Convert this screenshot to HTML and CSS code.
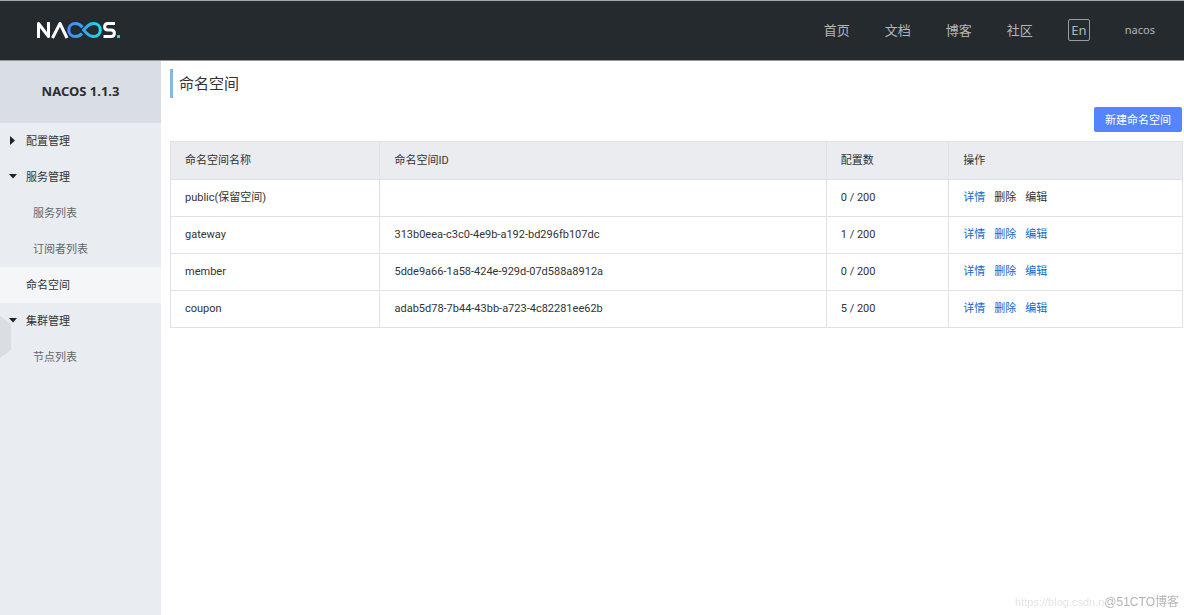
FILE: index.html
```html
<!DOCTYPE html>
<html lang="zh-CN">
<head>
<meta charset="utf-8">
<title>Nacos</title>
<link rel="stylesheet" href="styles.css">
</head>
<body>
<header class="topbar">
  <a class="logo" href="#" aria-label="Nacos">
    <svg width="84" height="18" viewBox="0 0 84 18" fill="none" stroke-width="3" stroke-linejoin="round">
      <defs><linearGradient id="loop" gradientUnits="userSpaceOnUse" x1="31" y1="0" x2="66" y2="0"><stop offset="0" stop-color="#4a88ff"/><stop offset=".5" stop-color="#2fa8f5"/><stop offset="1" stop-color="#16e4f5"/></linearGradient></defs>
      <path d="M2.500 17V2.500L12.500 15.500V1M16.500 17L24 2.500L31 17" stroke="#fff"/>
      <path d="M46 12.500C44 15 42 15.500 39.500 15.500C35.500 15.500 32.800 12.700 32.800 9S35.500 2.500 39.500 2.500C42.500 2.500 44.500 4 46.500 6.200" stroke="url(#loop)"/>
      <path d="M57.500 15.500C61.500 15.500 64.300 12.700 64.300 9S61.500 2.500 57.500 2.500C55 2.500 53 3.500 51 5.500L47.500 9L51 12.500C53 14.500 55 15.500 57.500 15.500Z" stroke="url(#loop)"/>
      <path d="M79 2.500H72C67.500 2.500 67.500 9 72 9H75C79.500 9 79.500 15.500 75 15.500H67.500" stroke="#fff"/>
      <path d="M81 14h3v3h-3z" fill="#16dff0"/>
    </svg>
  </a>
  <nav class="nav">
    <a href="#">首页</a>
    <a href="#">文档</a>
    <a href="#">博客</a>
    <a href="#">社区</a>
    <button class="lang" type="button">En</button>
    <a class="user" href="#">nacos</a>
  </nav>
</header>
<div class="body">
  <aside class="sidebar">
    <h1 class="version">NACOS 1.1.3</h1>
    <button class="collapse" type="button" aria-label="收起菜单"><svg width="11" height="42" viewBox="0 0 11 42"><path d="M0 0L11 8V34L0 42Z" fill="#d9dde4"/></svg></button>
    <nav class="menu">
      <a class="item" href="#"><svg class="caret" width="10" height="10" viewBox="0 0 10 10"><path d="M2 0L7 4.500L2 9Z"/></svg>配置管理</a>
      <a class="item" href="#"><svg class="caret" width="10" height="10" viewBox="0 0 10 10"><path d="M1 2H9L5 6.500Z"/></svg>服务管理</a>
      <a class="item sub" href="#">服务列表</a>
      <a class="item sub" href="#">订阅者列表</a>
      <a class="item active" href="#">命名空间</a>
      <a class="item" href="#"><svg class="caret" width="10" height="10" viewBox="0 0 10 10"><path d="M1 2H9L5 6.500Z"/></svg>集群管理</a>
      <a class="item sub" href="#">节点列表</a>
    </nav>
  </aside>
  <main class="main">
    <h2 class="title">命名空间</h2>
    <div class="actions"><button class="create" type="button">新建命名空间</button></div>
    <table class="table">
      <colgroup><col class="col-name"><col class="col-id"><col class="col-count"><col class="col-ops"></colgroup>
      <thead><tr><th>命名空间名称</th><th>命名空间ID</th><th>配置数</th><th>操作</th></tr></thead>
      <tbody>
        <tr><td>public(保留空间)</td><td></td><td>0 / 200</td><td><div class="ops"><a href="#">详情</a><span>删除</span><span>编辑</span></div></td></tr>
        <tr><td>gateway</td><td>313b0eea-c3c0-4e9b-a192-bd296fb107dc</td><td>1 / 200</td><td><div class="ops"><a href="#">详情</a><a href="#">删除</a><a href="#">编辑</a></div></td></tr>
        <tr><td>member</td><td>5dde9a66-1a58-424e-929d-07d588a8912a</td><td>0 / 200</td><td><div class="ops"><a href="#">详情</a><a href="#">删除</a><a href="#">编辑</a></div></td></tr>
        <tr><td>coupon</td><td>adab5d78-7b44-43bb-a723-4c82281ee62b</td><td>5 / 200</td><td><div class="ops"><a href="#">详情</a><a href="#">删除</a><a href="#">编辑</a></div></td></tr>
      </tbody>
    </table>
  </main>
</div>
<div class="watermark"><span class="mark-url">https://blog.csdn.n</span><span class="mark-site">@51CTO博客</span></div>
</body>
</html>
```
FILE: styles.css
```css
* { box-sizing: border-box; }
body {
  margin: 0;
  min-height: 100vh;
  display: flex;
  flex-direction: column;
  background: #fff;
  color: #333;
  font: 11px/16px "Noto Sans", "Noto Sans CJK SC", sans-serif;
}
a { color: inherit; text-decoration: none; }
button { font: inherit; padding: 0; border: 0; cursor: pointer; }

.topbar {
  display: flex;
  align-items: center;
  justify-content: space-between;
  height: 61px;
  padding: 0 29px 2px 36px;
  background: #252a2f;
  border-top: 1px solid #a3a7aa;
  border-bottom: 1px solid #92979b;
}
.logo svg { display: block; }
.nav { display: flex; align-items: center; gap: 35px; font-size: 13px; line-height: 20px; color: #b5b7b9; }
.lang { width: 22px; height: 22px; border: 1px solid #9b9ea0; border-radius: 2px; background: none; color: #b5b7b9; line-height: 20px; }
.user { font-size: 11px; }

.body { display: flex; flex: 1; }
.sidebar { position: relative; flex: none; width: 161px; background: #e9ecf1; }
.version { margin: 0; padding: 19px 0 21px; background: #d9dde4; font-size: 13px; line-height: 22px; text-align: center; color: #2b2d30; }
.collapse { position: absolute; left: 0; top: 255px; background: none; }
.collapse svg { display: block; }
.menu { position: relative; display: flex; flex-direction: column; }
.item { display: flex; align-items: center; height: 36px; padding-left: 26px; }
.sub { padding-left: 33px; color: #666; }
.active { background: #f4f6f8; }
.caret { margin: 0 8px 0 -18px; fill: #222; }

.main { flex: 1; min-width: 0; padding: 8px 1px 8px 9px; }
.title { margin: 0; padding-left: 6px; border-left: 3px solid #86b7df; font-size: 15px; font-weight: 400; line-height: 29px; }
.actions { display: flex; justify-content: flex-end; padding: 9px 1px 9px 0; }
.create { height: 25px; padding: 0 11px; border-radius: 2px; background: #5584ff; color: #fff; }

.table { width: 100%; table-layout: fixed; border-collapse: collapse; font-family: Roboto, "Noto Sans CJK SC", sans-serif; }
.table th, .table td { height: 37px; padding: 0 14px; border: 1px solid #dfe1e6; text-align: left; font-weight: 400; }
.table th { height: 38px; background: #ebecf0; }
.col-name { width: 20.7%; }
.col-id { width: 44.1%; }
.col-count { width: 12.1%; }
.ops { display: flex; gap: 9px; }
.ops a { color: #0f68d0; }

.watermark { position: fixed; right: 5px; bottom: 4px; display: flex; font-family: "Liberation Sans", "Noto Sans CJK SC", sans-serif; line-height: 18px; }
.mark-url { color: #e4e4e4; }
.mark-site { color: #b4b4b4; font-size: 12px; }
```
